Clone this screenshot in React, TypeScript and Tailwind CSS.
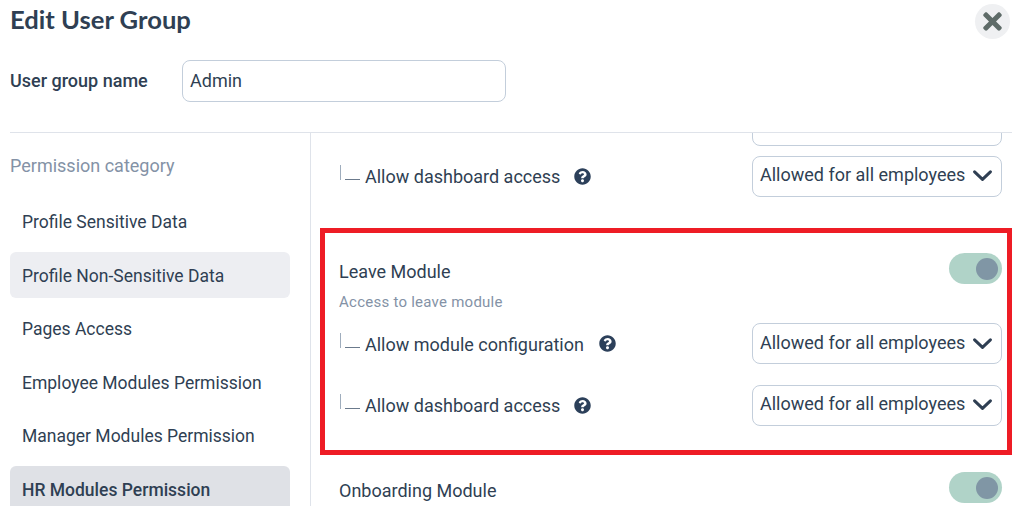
import React from "react";
import { FaQuestionCircle, FaTimes } from "react-icons/fa";

const categories = [
  { label: "Profile Sensitive Data", cls: "" },
  { label: "Profile Non-Sensitive Data", cls: "bg-[#edeef2]" },
  { label: "Pages Access", cls: "" },
  { label: "Employee Modules Permission", cls: "" },
  { label: "Manager Modules Permission", cls: "" },
  { label: "HR Modules Permission", cls: "bg-[#dfe1e6] font-medium" },
];

function Tree() {
  return (
    <svg width="21" height="16" viewBox="0 0 21 16" shapeRendering="crispEdges" className="mb-[6px] shrink-0">
      <rect x="1" y="0" width="1" height="15" fill="#9fadbd" />
      <rect x="6" y="14" width="15" height="1" fill="#6b7a8c" />
    </svg>
  );
}

function Chevron() {
  return (
    <svg width="19" height="12" viewBox="0 0 19 12" className="shrink-0" fill="none">
      <path d="M1.6 1.8 L9.5 9.4 L17.4 1.8" stroke="#2f3f53" strokeWidth="3" strokeLinecap="round" strokeLinejoin="round" />
    </svg>
  );
}

function Select() {
  return (
    <div className="flex h-[41px] w-[250px] shrink-0 items-center justify-between rounded-[8px] border border-[#c3cedb] bg-white pb-[3px] pl-[7px] pr-[9px] text-[18px] text-[#2f3f53]">
      <span>Allowed for all employees</span>
      <span className="pt-[3px]"><Chevron /></span>
    </div>
  );
}

function PermRow({ label, gap }: { label: string; gap: string }) {
  return (
    <div className="flex h-[41px] items-center justify-between">
      <div className="flex items-center text-[18px] text-[#2f3f53]">
        <Tree />
        <span className="ml-[5px] pt-[1px]">{label}</span>
        <FaQuestionCircle className={`${gap} shrink-0 text-[#2c405a]`} size={17} />
      </div>
      <Select />
    </div>
  );
}

function Toggle() {
  return (
    <div className="flex h-[31px] w-[53px] items-center justify-end rounded-full bg-[#b0d3c8] pr-[4px]">
      <div className="h-[22px] w-[22px] rounded-full bg-[#8096a5]" />
    </div>
  );
}

export default function App() {
  return (
    <div className="h-[506px] w-[1012px] overflow-hidden bg-white font-['Roboto',sans-serif] text-[#2f3f53]">
      <header className="flex h-[40px] items-start justify-between pl-[10px] pr-[2px] pt-[4px]">
        <h1 className="-mt-[1px] font-['Lato',sans-serif] text-[25.6px] font-bold leading-[32px] text-[#2f3f53]">Edit User Group</h1>
        <button className="flex h-[35px] w-[35px] items-center justify-center rounded-full bg-[#eff0f2] text-[#5e6b68]">
          <FaTimes size={27} />
        </button>
      </header>

      <div className="mt-[20px] flex h-[42px] items-center pl-[10px]">
        <span className="w-[172px] pb-[2px] text-[18px] font-medium">User group name</span>
        <div className="flex h-[42px] w-[324px] items-center rounded-[8px] border border-[#c3cedb] pb-[2px] pl-[7px] text-[18px]">Admin</div>
      </div>

      <div className="ml-[10px] mt-[30px] flex h-[374px] border-t border-[#dfe3ea]">
        <aside className="w-[301px] shrink-0 border-r border-[#dfe3ea] pr-[20px]">
          <p className="mt-[21px] h-[24px] text-[18px] leading-[24px] text-[#8492a6]">Permission category</p>
          <ul className="mt-[20.5px] flex flex-col gap-[7.5px]">
            {categories.map((c) => (
              <li key={c.label} className={`flex h-[46px] shrink-0 items-center rounded-[6px] pl-[12px] pt-[2px] text-[17.5px] ${c.cls}`}>
                {c.label}
              </li>
            ))}
          </ul>
        </aside>

        <section className="min-w-0 flex-1 overflow-hidden pl-[9px]">
          <div className="-mt-[29px] flex flex-col">
            <div className="flex justify-end pr-[10px]">
              <div className="h-[42px] w-[250px] rounded-[8px] border border-[#c3cedb] bg-white" />
            </div>
            <div className="mt-[9.6px] pl-[19px] pr-[10px]">
              <PermRow label="Allow dashboard access" gap="ml-[14px]" />
            </div>

            <div className="mt-[31.5px] h-[227px] border-[5px] border-[#ee1c25] pl-[14px] pr-[5px] pt-[20px]">
              <div className="flex h-[31px] items-center justify-between">
                <span className="pt-[5px] text-[18px]">Leave Module</span>
                <Toggle />
              </div>
              <p className="mt-[8px] h-[20px] text-[15px] leading-[20px] tracking-[0.25px] text-[#8492a6]">Access to leave module</p>
              <div className="mt-[11px] flex flex-col gap-[20.5px]">
                <PermRow label="Allow module configuration" gap="ml-[15px]" />
                <PermRow label="Allow dashboard access" gap="ml-[14px]" />
              </div>
            </div>

            <div className="mt-[17px] flex h-[31px] items-center justify-between pl-[19px] pr-[10px]">
              <span className="pt-[6px] text-[18px]">Onboarding Module</span>
              <Toggle />
            </div>
          </div>
        </section>
      </div>
    </div>
  );
}
